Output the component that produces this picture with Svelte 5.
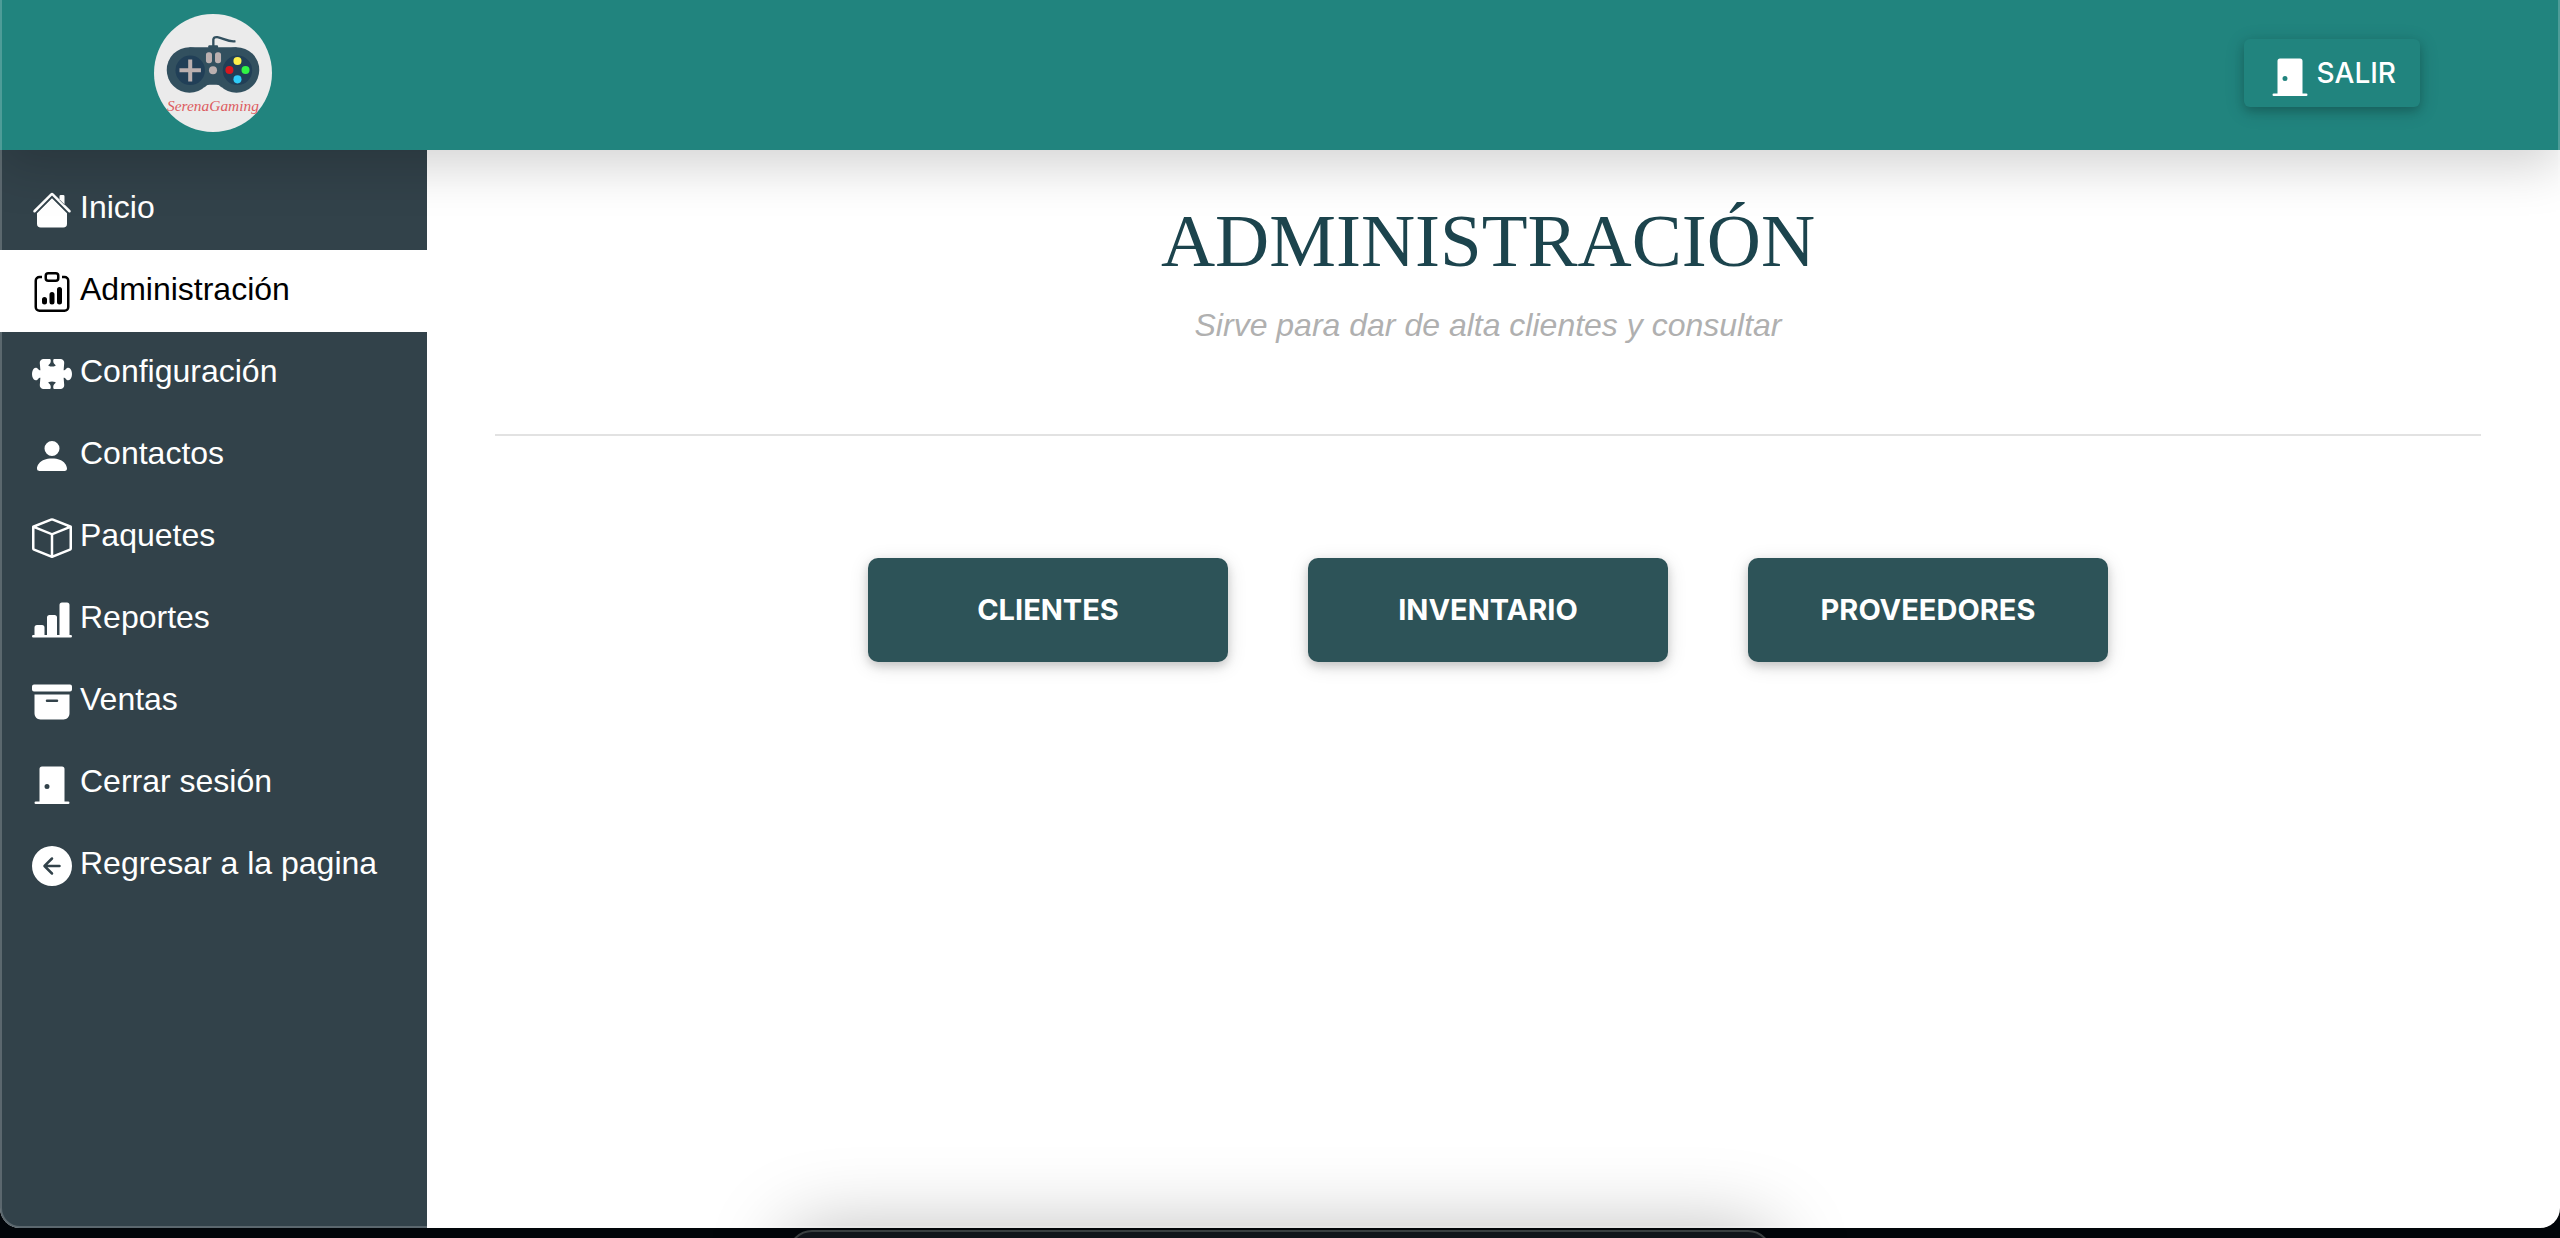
<script>
  const door =
    'M4 1a1 1 0 0 0-1 1v13H1.5a.5.5 0 0 0 0 1h13a.5.5 0 0 0 0-1H13V2a1 1 0 0 0-1-1H4zm2 9a1 1 0 1 0 0-2 1 1 0 0 0 0 2z';

  const menu = [
    {
      label: 'Inicio',
      icon: 'm8 3.293 6 6V13.5a1.5 1.5 0 0 1-1.5 1.5h-9A1.5 1.5 0 0 1 2 13.5V9.293l6-6zm5-.793V6l-2-2V2.5a.5.5 0 0 1 .5-.5h1a.5.5 0 0 1 .5.5zM7.293 1.5a1 1 0 0 1 1.414 0l6.647 6.646a.5.5 0 0 1-.708.708L8 2.207 1.354 8.854a.5.5 0 1 1-.708-.708L7.293 1.5z'
    },
    {
      label: 'Administración',
      active: true,
      icon: 'M4 11a1 1 0 1 1 2 0v1a1 1 0 1 1-2 0v-1zm6-4a1 1 0 1 1 2 0v5a1 1 0 1 1-2 0V7zM7 9a1 1 0 0 1 2 0v3a1 1 0 1 1-2 0V9zM4 1.5H3a2 2 0 0 0-2 2V14a2 2 0 0 0 2 2h10a2 2 0 0 0 2-2V3.5a2 2 0 0 0-2-2h-1v1h1a1 1 0 0 1 1 1V14a1 1 0 0 1-1 1H3a1 1 0 0 1-1-1V3.5a1 1 0 0 1 1-1h1v-1zM9.5 1a.5.5 0 0 1 .5.5v1a.5.5 0 0 1-.5.5h-3a.5.5 0 0 1-.5-.5v-1a.5.5 0 0 1 .5-.5h3zm-3-1A1.5 1.5 0 0 0 5 1.5v1A1.5 1.5 0 0 0 6.5 4h3A1.5 1.5 0 0 0 11 2.5v-1A1.5 1.5 0 0 0 9.5 0h-3z'
    },
    {
      label: 'Configuración',
      icon: 'M3.112 3.645A1.5 1.5 0 0 1 4.605 2H7a.5.5 0 0 1 .5.5v.382c0 .696-.497 1.182-.872 1.469a.459.459 0 0 0-.115.118.113.113 0 0 0-.012.025L6.5 4.5v.003l.003.01c.004.01.014.028.036.053a.86.86 0 0 0 .27.194C7.09 4.9 7.51 5 8 5c.492 0 .912-.1 1.19-.24a.86.86 0 0 0 .271-.194.213.213 0 0 0 .039-.063v-.009a.112.112 0 0 0-.012-.025.459.459 0 0 0-.115-.118c-.375-.287-.872-.773-.872-1.469V2.5A.5.5 0 0 1 9 2h2.395a1.5 1.5 0 0 1 1.493 1.645L12.645 6.5h.237c.195 0 .42-.147.675-.48.21-.274.528-.52.943-.52.568 0 .947.447 1.154.862C15.877 6.807 16 7.387 16 8s-.123 1.193-.346 1.638c-.207.415-.586.862-1.154.862-.415 0-.733-.246-.943-.52-.255-.333-.48-.48-.675-.48h-.237l.243 2.855A1.5 1.5 0 0 1 11.395 14H9a.5.5 0 0 1-.5-.5v-.382c0-.696.497-1.182.872-1.469a.459.459 0 0 0 .115-.118.113.113 0 0 0 .012-.025L9.5 11.5v-.003a.214.214 0 0 0-.039-.064.859.859 0 0 0-.27-.193C8.91 11.1 8.49 11 8 11c-.491 0-.912.1-1.19.24a.859.859 0 0 0-.271.194.214.214 0 0 0-.039.063v.003l.001.006a.113.113 0 0 0 .012.025c.016.027.05.068.115.118.375.287.872.773.872 1.469v.382a.5.5 0 0 1-.5.5H4.605a1.5 1.5 0 0 1-1.493-1.645L3.356 9.5h-.238c-.195 0-.42.147-.675.48-.21.274-.528.52-.943.52-.568 0-.947-.447-1.154-.862C.123 9.193 0 8.613 0 8s.123-1.193.346-1.638C.553 5.947.932 5.5 1.5 5.5c.415 0 .733.246.943.52.255.333.48.48.675.48h.238l-.244-2.855z'
    },
    {
      label: 'Contactos',
      icon: 'M3 14s-1 0-1-1 1-4 6-4 6 3 6 4-1 1-1 1H3zm5-6a3 3 0 1 0 0-6 3 3 0 0 0 0 6z'
    },
    {
      label: 'Paquetes',
      icon: 'M8.186 1.113a.5.5 0 0 0-.372 0L1.846 3.5 8 5.961 14.154 3.5 8.186 1.113zM15 4.239l-6.5 2.6v7.922l6.5-2.6V4.24zM7.5 14.762V6.838L1 4.239v7.923l6.5 2.6zM7.443.184a1.5 1.5 0 0 1 1.114 0l7.129 2.852A.5.5 0 0 1 16 3.5v8.662a1 1 0 0 1-.629.928l-7.185 2.874a.5.5 0 0 1-.372 0L.63 13.09a1 1 0 0 1-.63-.928V3.5a.5.5 0 0 1 .314-.464L7.443.184z'
    },
    {
      label: 'Reportes',
      icon: 'M11 2a1 1 0 0 1 1-1h2a1 1 0 0 1 1 1v12h.5a.5.5 0 0 1 0 1H.5a.5.5 0 0 1 0-1H1v-3a1 1 0 0 1 1-1h2a1 1 0 0 1 1 1v3h1V7a1 1 0 0 1 1-1h2a1 1 0 0 1 1 1v7h1V2z'
    },
    {
      label: 'Ventas',
      icon: 'M12.643 15C13.979 15 15 13.845 15 12.5V5H1v7.5C1 13.845 2.021 15 3.357 15h9.286zM6 7h4a.5.5 0 0 1 0 1H6a.5.5 0 0 1 0-1zM.8 1a.8.8 0 0 0-.8.8V3a.8.8 0 0 0 .8.8h14.4A.8.8 0 0 0 16 3V1.8a.8.8 0 0 0-.8-.8H.8z'
    },
    { label: 'Cerrar sesión', icon: door },
    {
      label: 'Regresar a la pagina',
      icon: 'M8 0a8 8 0 1 0 0 16A8 8 0 0 0 8 0zm3 7.5a.5.5 0 0 1 0 1H6.207l2.147 2.146a.5.5 0 0 1-.708.708l-3-3a.5.5 0 0 1 0-.708l3-3a.5.5 0 1 1 .708.708L6.207 7.5H11z'
    }
  ];

  const sections = ['CLIENTES', 'INVENTARIO', 'PROVEEDORES'];
</script>

{#snippet icon(path)}
  <svg class="icon" viewBox="0 0 16 16" aria-hidden="true">
    <path fill-rule="evenodd" d={path} />
  </svg>
{/snippet}

<div class="desktop">
  <div class="window">
    <header>
      <a class="brand" href="#inicio" aria-label="SerenaGaming">
        <svg class="logo" viewBox="0 0 352 352">
          <circle cx="176" cy="176" r="176" fill="#ebebeb" />
          <path d="M177 96V76q1-8 12-7c18 3 34 16 54 12" fill="none" stroke="#32505f" stroke-width="7" />
          <g fill="#32505f">
            <rect x="162" y="93" width="29" height="14" rx="3" />
            <circle cx="106" cy="167" r="68" />
            <circle cx="246" cy="167" r="68" />
            <path d="M106 99h140v111H106z" />
            <path d="M150 219q8-9 16-9h20q8 0 16 9V200h-52z" />
          </g>
          <circle cx="108" cy="168" r="44" fill="#213f57" />
          <circle cx="249" cy="168" r="44" fill="#213f57" />
          <path d="M102 136h12v26h26v12h-26v27h-12v-27H76v-12h26z" fill="#bbb0b0" />
          <rect x="155" y="114" width="18" height="33" rx="8" fill="#bbb0b0" />
          <rect x="182" y="114" width="18" height="33" rx="8" fill="#bbb0b0" />
          <circle cx="176" cy="168" r="12" fill="#bbb0b0" />
          <circle cx="249" cy="140" r="12" fill="#fff04b" />
          <circle cx="225" cy="167" r="12" fill="#d8171e" />
          <circle cx="273" cy="167" r="12" fill="#31f445" />
          <circle cx="249" cy="195" r="12" fill="#2fccf9" />
          <text x="176" y="289" text-anchor="middle">SerenaGaming</text>
        </svg>
      </a>
      <button class="logout" type="button">{@render icon(door)}<span>SALIR</span></button>
    </header>

    <div class="body">
      <nav>
        {#each menu as item}
          <a href="#menu" class:active={item.active} aria-current={item.active ? 'page' : undefined}>
            {@render icon(item.icon)}<span>{item.label}</span>
          </a>
        {/each}
      </nav>

      <main>
        <h1>ADMINISTRACIÓN</h1>
        <p>Sirve para dar de alta clientes y consultar</p>
        <hr />
        <div class="sections">
          {#each sections as section}
            <button type="button">{section}</button>
          {/each}
        </div>
      </main>
    </div>
  </div>
  <div class="dock"></div>
</div>

<style>
  :global(body) {
    margin: 0;
  }

  .desktop {
    position: relative;
    display: flex;
    flex-direction: column;
    box-sizing: border-box;
    min-height: 100vh;
    padding-bottom: 10px;
    overflow: hidden;
    background: #02060a;
    font-family: 'Helvetica Neue', 'Liberation Sans', Arial, sans-serif;
  }

  .window {
    position: relative;
    display: flex;
    flex: 1;
    flex-direction: column;
    overflow: hidden;
    border-radius: 0 0 20px 20px;
    background: #fff;
  }

  .window::after {
    position: absolute;
    z-index: 2;
    inset: 0;
    border: 2px solid rgba(255, 255, 255, 0.2);
    border-top: 0;
    border-radius: inherit;
    content: '';
    pointer-events: none;
  }

  header {
    position: relative;
    z-index: 1;
    display: flex;
    align-items: center;
    justify-content: space-between;
    box-sizing: border-box;
    height: 150px;
    padding: 0 140px 4px 154px;
    background: #21847e;
    box-shadow: 0 16px 48px rgba(0, 0, 0, 0.175);
  }

  .brand,
  .logo {
    display: block;
    width: 118px;
    height: 118px;
  }

  .logo text {
    fill: #dd5c5f;
    font: italic 400 46px 'Brush Script MT', 'Liberation Serif', serif;
  }

  .icon {
    flex: none;
    width: 40px;
    height: 40px;
    fill: currentColor;
  }

  .logout {
    display: flex;
    align-items: flex-start;
    gap: 7px;
    padding: 17px 24px 11px 26px;
    border: 0;
    border-radius: 6px;
    background: #21847e;
    box-shadow: 0 4px 10px rgba(0, 0, 0, 0.16), 0 4px 20px rgba(0, 0, 0, 0.16);
    color: #fff;
    font: 500 28px/34px Inter, sans-serif;
  }

  .body {
    display: flex;
    flex: 1;
  }

  nav {
    box-sizing: border-box;
    flex: none;
    width: 427px;
    padding-top: 18px;
    background: #32424a;
  }

  nav a {
    display: flex;
    align-items: flex-start;
    gap: 8px;
    padding: 22px 16px 20px 32px;
    color: #fff;
    font-size: 32px;
    font-weight: 300;
    line-height: 34px;
    text-decoration: none;
  }

  nav a.active {
    background: #fff;
    color: #000;
  }

  main {
    flex: 1;
    padding: 49px 79px 48px 68px;
    text-align: center;
  }

  h1 {
    margin: 0 0 22px;
    color: #1c444d;
    font: 400 75px/84px Baskerville, 'Liberation Serif', serif;
  }

  p {
    margin: 0;
    color: #b0b0b0;
    font-size: 32px;
    font-style: italic;
    font-weight: 300;
    line-height: 40px;
  }

  hr {
    height: 2px;
    margin: 89px 0 122px;
    border: 0;
    background: #e2e2e2;
  }

  .sections {
    display: flex;
    flex-wrap: wrap;
    justify-content: center;
    gap: 80px;
  }

  .sections button {
    width: 360px;
    height: 104px;
    border: 0;
    border-radius: 10px;
    background: #2d5358;
    box-shadow: 0 4px 10px rgba(0, 0, 0, 0.16), 0 4px 20px rgba(0, 0, 0, 0.12);
    color: #fff;
    font: 700 29px/34px Inter, sans-serif;
  }

  /* Dock peeking over the lower edge of the screen */
  .dock {
    position: absolute;
    top: calc(100% - 8px);
    left: 30.8%;
    right: 30.8%;
    height: 120px;
    border: 2px solid #3a3f40;
    border-radius: 24px;
    background: #11151a;
    box-shadow: 0 0 80px rgba(0, 0, 0, 0.27);
  }
</style>
